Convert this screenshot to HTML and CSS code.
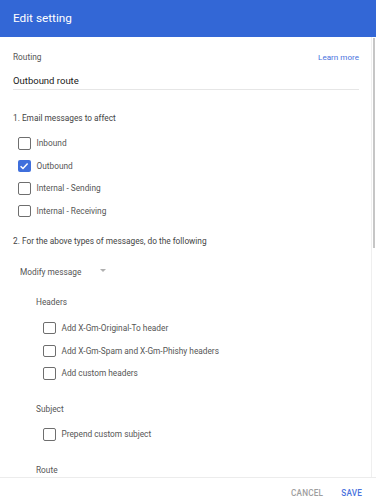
FILE: index.html
```html
<!DOCTYPE html>
<html>
<head>
<meta charset="utf-8">
<link rel="stylesheet" href="styles.css">
</head>
<body>
<div class="dialog">
  <header class="title-bar">Edit setting</header>
  <div class="body-wrap">
    <main class="content">
      <div class="top-row">
        <span class="label">Routing</span>
        <a class="link">Learn more</a>
      </div>
      <div class="name-field">Outbound route</div>

      <div class="section-title s1">1. Email messages to affect</div>
      <div class="checks">
        <div class="check-row"><span class="box"></span><span class="label">Inbound</span></div>
        <div class="check-row"><span class="box checked"><svg viewBox="0 0 12 12" width="12" height="12"><path d="M2.6 6.2 L5 8.5 L9.6 3.6" fill="none" stroke="#fff" stroke-width="1.5"/></svg></span><span class="label">Outbound</span></div>
        <div class="check-row"><span class="box"></span><span class="label">Internal - Sending</span></div>
        <div class="check-row"><span class="box"></span><span class="label">Internal - Receiving</span></div>
      </div>

      <div class="section-title s2">2. For the above types of messages, do the following</div>
      <div class="select"><span class="label">Modify message</span><span class="arrow"></span></div>

      <div class="group">
        <div class="group-title">Headers</div>
        <div class="checks sub">
          <div class="check-row"><span class="box"></span><span class="label">Add X-Gm-Original-To header</span></div>
          <div class="check-row"><span class="box"></span><span class="label">Add X-Gm-Spam and X-Gm-Phishy headers</span></div>
          <div class="check-row"><span class="box"></span><span class="label">Add custom headers</span></div>
        </div>
      </div>

      <div class="group">
        <div class="group-title">Subject</div>
        <div class="checks sub">
          <div class="check-row"><span class="box"></span><span class="label">Prepend custom subject</span></div>
        </div>
      </div>

      <div class="group">
        <div class="group-title">Route</div>
      </div>
    </main>
    <div class="scrollbar"><div class="thumb"></div></div>
  </div>
  <footer class="actions">
    <span class="btn cancel">CANCEL</span>
    <span class="btn save">SAVE</span>
  </footer>
</div>
</body>
</html>
```

FILE: styles.css
```css
html, body {
  margin: 0;
  padding: 0;
  overflow: hidden;
  background: #fff;
}
body {
  font-family: Roboto, "Liberation Sans", Arial, sans-serif;
  font-size: 8.3px;
  color: #555;
}
.dialog {
  height: 508px;
  display: flex;
  flex-direction: column;
}
.title-bar {
  height: 37px;
  flex: none;
  background: #3367d6;
  color: #fff;
  font-size: 11.8px;
  line-height: 36px;
  padding-left: 13px;
  box-sizing: border-box;
}
.body-wrap {
  flex: 1;
  min-height: 0;
  display: flex;
}
.content {
  flex: 1;
  overflow: hidden;
  padding: 13px 12px 0 13px;
  box-sizing: border-box;
  min-height: 0;
}
.scrollbar {
  width: 5px;
  flex: none;
  box-sizing: border-box;
  border-left: 1px solid #efefef;
  padding: 1px 1px 0 1px;
}
.thumb {
  height: 210px;
  background: #c6c6c6;
}
.label {
  font-size: 8.3px;
  line-height: 14px;
  color: #555;
}
.top-row {
  display: flex;
  justify-content: space-between;
  align-items: center;
  height: 14px;
}
.link {
  color: #4a72de;
  font-size: 8.1px;
  line-height: 14px;
}
.name-field {
  margin-top: 9px;
  font-size: 9.5px;
  line-height: 16px;
  color: #212121;
  border-bottom: 1px solid #e6e6e6;
}
.section-title {
  font-size: 8.3px;
  line-height: 14px;
  color: #444;
}
.s1 {
  margin-top: 21px;
}
.checks {
  display: flex;
  flex-direction: column;
  margin-top: 7px;
  padding-left: 5px;
}
.checks.sub {
  padding-left: 7px;
  margin-top: 7.5px;
}
.check-row {
  display: flex;
  align-items: center;
  height: 22.6px;
  gap: 6px;
}
.box {
  width: 12.5px;
  height: 12.5px;
  box-sizing: border-box;
  border: 1.6px solid #6e6e6e;
  border-radius: 2px;
  flex: none;
  display: flex;
  align-items: center;
  justify-content: center;
}
.box.checked {
  border: none;
  background: #3f6fdc;
}
.s2 {
  margin-top: 12px;
}
.select {
  display: flex;
  align-items: center;
  margin-top: 17px;
  padding-left: 7px;
  height: 14px;
}
.arrow {
  width: 0;
  height: 0;
  border-left: 3.5px solid transparent;
  border-right: 3.5px solid transparent;
  border-top: 3.5px solid #b0b0b0;
  margin-left: 19px;
  margin-top: -3px;
}
.group {
  padding-left: 23px;
  margin-top: 16px;
}
.group + .group {
  margin-top: 17px;
}
.group-title {
  font-size: 8.3px;
  line-height: 14px;
  color: #555;
}
.actions {
  height: 31px;
  flex: none;
  border-top: 1px solid #ececec;
  box-sizing: border-box;
  display: flex;
  justify-content: flex-end;
  align-items: center;
  padding-right: 14px;
  gap: 18px;
}
.btn {
  font-size: 8.2px;
  font-weight: 500;
  letter-spacing: 0.2px;
}
.cancel {
  color: #9e9e9e;
}
.save {
  color: #4a72de;
}
```
